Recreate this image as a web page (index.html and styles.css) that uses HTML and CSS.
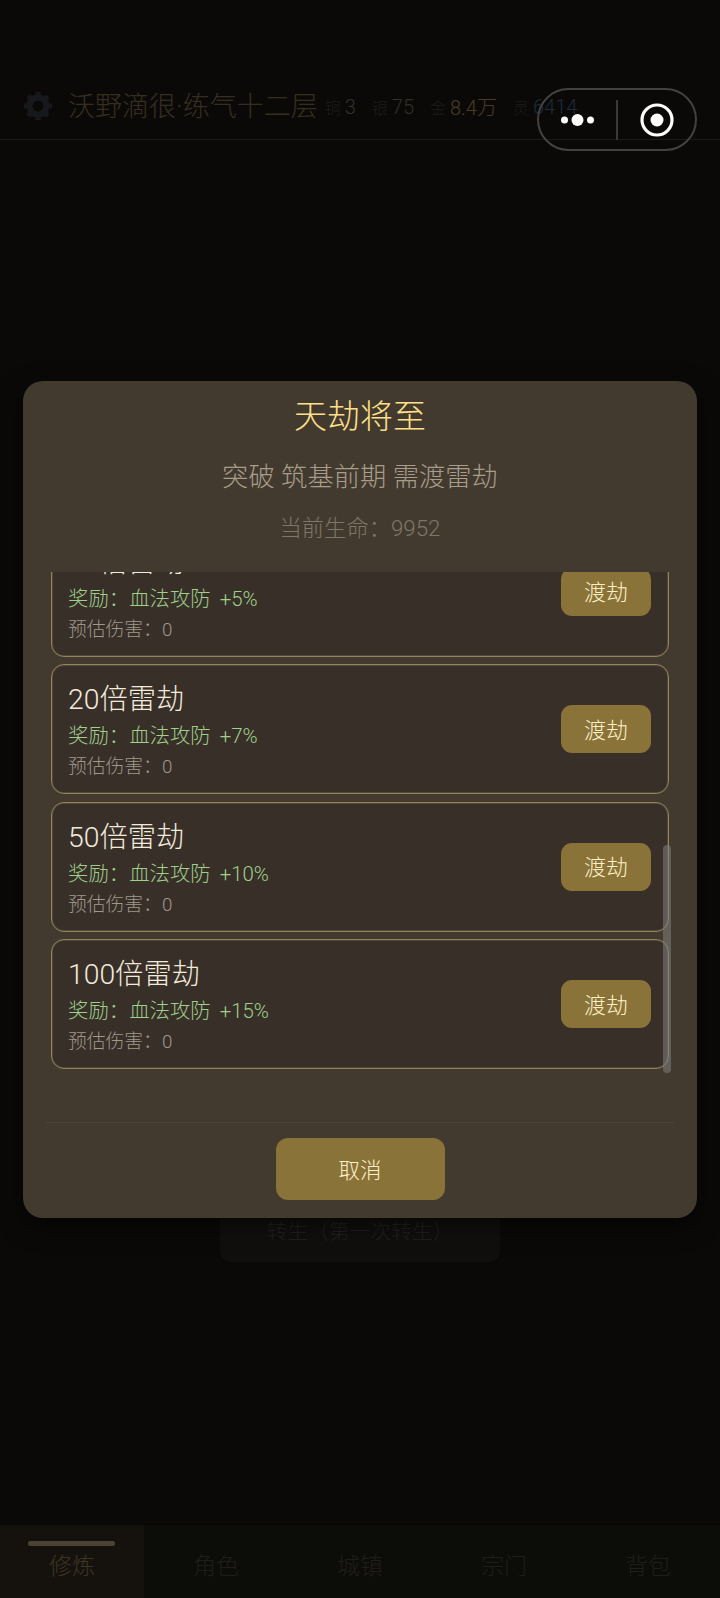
FILE: index.html
```html
<!DOCTYPE html>
<html lang="zh-CN">
<head>
<meta charset="utf-8">
<title>天劫将至</title>
<link rel="stylesheet" href="styles.css">
</head>
<body>
<div class="app">
  <header class="topbar">
    <svg class="gear" viewBox="0 0 32 32" aria-hidden="true">
      <g class="gear-teeth">
        <line x1="16" y1="2" x2="16" y2="30"/>
        <line x1="2" y1="16" x2="30" y2="16"/>
        <line x1="6.1" y1="6.1" x2="25.9" y2="25.9"/>
        <line x1="25.9" y1="6.1" x2="6.1" y2="25.9"/>
      </g>
      <circle class="gear-ring" cx="16" cy="16" r="8.5"/>
    </svg>
    <span class="player">沃野滴很·练气十二层</span>
    <div class="stats">
      <span class="stat"><small>铜</small><b>3</b></span>
      <span class="stat"><small>银</small><b>75</b></span>
      <span class="stat"><small>金</small><b class="gold">8.4万</b></span>
      <span class="stat"><small>灵</small><b class="blue">6414</b></span>
    </div>
  </header>
  <main class="main">
    <button class="rebirth">转生（第一次转生）</button>
  </main>
  <nav class="tabs">
    <span class="tab active">修炼</span>
    <span class="tab">角色</span>
    <span class="tab">城镇</span>
    <span class="tab">宗门</span>
    <span class="tab">背包</span>
  </nav>
</div>

<div class="overlay">
  <section class="modal">
    <div class="modal-head">
      <h1 class="modal-title">天劫将至</h1>
      <p class="modal-sub">突破 筑基前期 需渡雷劫</p>
      <p class="modal-hp">当前生命：9952</p>
    </div>
    <div class="list">
      <div class="cards">
        <article class="card">
          <div class="card-text">
            <div class="card-title">10倍雷劫</div>
            <div class="card-reward">奖励：血法攻防 +5%</div>
            <div class="card-damage">预估伤害：0</div>
          </div>
          <button class="btn-go">渡劫</button>
        </article>
        <article class="card">
          <div class="card-text">
            <div class="card-title">20倍雷劫</div>
            <div class="card-reward">奖励：血法攻防 +7%</div>
            <div class="card-damage">预估伤害：0</div>
          </div>
          <button class="btn-go">渡劫</button>
        </article>
        <article class="card">
          <div class="card-text">
            <div class="card-title">50倍雷劫</div>
            <div class="card-reward">奖励：血法攻防 +10%</div>
            <div class="card-damage">预估伤害：0</div>
          </div>
          <button class="btn-go">渡劫</button>
        </article>
        <article class="card">
          <div class="card-text">
            <div class="card-title">100倍雷劫</div>
            <div class="card-reward">奖励：血法攻防 +15%</div>
            <div class="card-damage">预估伤害：0</div>
          </div>
          <button class="btn-go">渡劫</button>
        </article>
      </div>
      <div class="scrollbar"></div>
    </div>
    <div class="modal-foot">
      <button class="btn-cancel">取消</button>
    </div>
  </section>
</div>

<div class="capsule">
  <svg class="capsule-dots" viewBox="0 0 46 14" aria-hidden="true">
    <circle cx="3.5" cy="7" r="3.5"/>
    <circle cx="16.5" cy="7" r="6"/>
    <circle cx="29.5" cy="7" r="3.5"/>
  </svg>
  <span class="capsule-sep"></span>
  <svg class="capsule-target" viewBox="0 0 36 36" aria-hidden="true">
    <circle class="target-ring" cx="18" cy="18" r="15"/>
    <circle cx="18" cy="18" r="6.5"/>
  </svg>
</div>
</body>
</html>
```
FILE: styles.css
```css
* {
  box-sizing: border-box;
}

html,
body {
  margin: 0;
  padding: 0;
  height: 100%;
}

body {
  position: relative;
  overflow: hidden;
  background: #221e1a;
  font-family: Roboto, "Noto Sans CJK SC", "Noto Sans", sans-serif;
  font-weight: 300;
}

button {
  border: 0;
  padding: 0;
  font-family: inherit;
  font-weight: 300;
}

p,
h1 {
  margin: 0;
  font-weight: 300;
}

.app {
  display: flex;
  flex-direction: column;
  height: 1598px;
}

.topbar {
  display: flex;
  align-items: center;
  height: 140px;
  padding: 72px 0 0 22px;
  border-bottom: 1px solid #5f594c;
}

.gear {
  width: 32px;
  height: 32px;
  flex: none;
  margin-right: 14px;
}

.gear-teeth line {
  stroke: #4e525b;
  stroke-width: 5;
}

.gear-ring {
  fill: #221e1a;
  stroke: #4e525b;
  stroke-width: 6;
}

.player {
  padding-top: 2px;
  color: #b39a69;
  font-size: 27px;
  line-height: 36px;
  white-space: nowrap;
}

.stats {
  display: flex;
  margin-left: 7px;
  padding-top: 2px;
  gap: 16px;
}

.stat {
  display: flex;
  align-items: center;
  gap: 4px;
  white-space: nowrap;
}

.stat small {
  color: #5f5b54;
  font-size: 16px;
}

.stat b {
  color: #a89f8a;
  font-size: 20px;
  font-weight: 300;
}

.stat .gold {
  color: #f0c764;
}

.stat .blue {
  color: #6190c1;
}

.main {
  flex: 1;
  display: flex;
  flex-direction: column;
  align-items: center;
  justify-content: flex-end;
  padding-bottom: 263px;
}

.rebirth {
  width: 280px;
  height: 60px;
  border-radius: 12px;
  background: #38352f;
  color: #6b6860;
  font-size: 20.8px;
  line-height: 60px;
}

.tabs {
  display: flex;
  height: 73px;
  background: #2b2820;
  border-top: 1px solid #302c24;
}

.tab {
  position: relative;
  flex: 1;
  padding-top: 18px;
  color: #67615a;
  font-size: 23px;
  line-height: 46px;
  text-align: center;
}

.tab.active {
  background: #463c2f;
  color: #cbad7b;
}

.tab.active::before {
  content: "";
  position: absolute;
  top: 15px;
  left: 28px;
  width: 87px;
  height: 5px;
  border-radius: 2px;
  background: #fadca7;
}

.overlay {
  position: absolute;
  inset: 0;
  display: flex;
  align-items: center;
  justify-content: center;
  background: rgba(0, 0, 0, 0.7);
}

.modal {
  width: 674px;
  border-radius: 20px;
  background: #433a2f;
  box-shadow: 0 8px 24px rgba(0, 0, 0, 0.5);
  overflow: hidden;
}

.modal-head {
  padding: 15px 0 26px;
  text-align: center;
}

.modal-title {
  color: #ffe088;
  font-size: 33px;
  line-height: 42px;
}

.modal-sub {
  margin-top: 19px;
  color: #a89c8a;
  font-size: 26.3px;
  line-height: 40px;
}

.modal-hp {
  margin-top: 13px;
  color: #7f7667;
  font-size: 22.3px;
  line-height: 36px;
}

.list {
  position: relative;
  height: 550px;
  overflow: hidden;
}

.cards {
  display: flex;
  flex-direction: column;
  gap: 7.5px;
  margin: -45px 28px 0;
}

.card {
  display: flex;
  align-items: center;
  justify-content: space-between;
  height: 130px;
  padding: 0 17px 0 16px;
  border: 1px solid #94845a;
  border-radius: 13px;
  background: #382f29;
  box-shadow: inset 0 0 0 1px rgba(148, 132, 90, 0.3);
}

.card-text {
  padding-top: 3px;
}

.card-title {
  color: #f2eadb;
  font-size: 28.3px;
  line-height: 40px;
}

.card-reward {
  color: #9fd08a;
  font-size: 20.4px;
  line-height: 33px;
  word-spacing: 4px;
}

.card-damage {
  color: #a0988a;
  font-size: 18.8px;
  line-height: 28px;
}

.btn-go {
  width: 90px;
  height: 48px;
  padding-bottom: 3px;
  border-radius: 11px;
  background: #8a7339;
  color: #fff0c8;
  font-size: 22px;
}

.scrollbar {
  position: absolute;
  top: 273px;
  left: 640px;
  width: 8px;
  height: 228px;
  border-radius: 4px;
  background: rgba(128, 128, 128, 0.55);
}

.modal-foot {
  display: flex;
  justify-content: center;
  height: 96px;
  margin: 0 23px;
  padding-top: 15px;
  border-top: 1px solid #4c4336;
}

.btn-cancel {
  width: 169px;
  height: 62px;
  border-radius: 12px;
  background: #8a7339;
  color: #fff0c8;
  font-size: 21.5px;
}

.capsule {
  position: absolute;
  top: 88px;
  left: 537px;
  display: flex;
  align-items: center;
  width: 160px;
  height: 63px;
  border: 2px solid #444240;
  border-radius: 32px;
}

.capsule-dots {
  width: 46px;
  height: 14px;
  margin-left: 22px;
  fill: #fff;
}

.capsule-sep {
  width: 2px;
  height: 40px;
  margin-left: 9px;
  background: #3a3937;
}

.capsule-target {
  width: 36px;
  height: 36px;
  margin-left: 21px;
  fill: #fff;
}

.target-ring {
  fill: none;
  stroke: #fff;
  stroke-width: 3.2;
}
```
